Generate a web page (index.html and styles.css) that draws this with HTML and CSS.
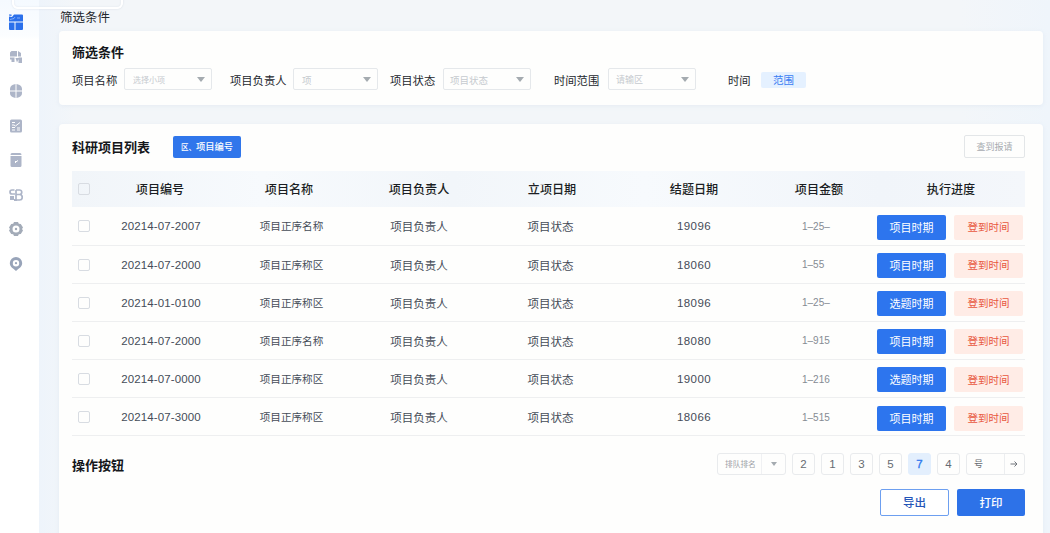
FILE: index.html
```html
<!DOCTYPE html>
<html lang="zh-CN">
<head>
    <meta charset="UTF-8">
    <meta name="viewport" content="width=device-width, initial-scale=1.0">
    <title>科研项目列表</title>
    <link rel="stylesheet" href="styles.css">
</head>
<body>
    <div class="top-tab"></div>
    <nav class="sidebar">
        <a class="active"><svg width="16" height="18" viewBox="0 0 16 18"><path d="M1 3.500L4 4l2-2.500h8a1 1 0 0 1 1 1v6H1zM1 9.500h5.500V17H2a1 1 0 0 1-1-1zM7.500 9.500H15V16a1 1 0 0 1-1 1H7.500zM1 1.500h2.500V3L1 2.500z"/><path class="line" d="M2 6.500l4-1 1-1.500M9 5h3"/></svg></a>
        <a><svg width="14" height="14" viewBox="0 0 14 14"><path d="M2.500 1H8v5.500H1v-4zM9 1l3 2v3.500H9zM1 7.500h4.500V12H2.500V9.500H1zM6.500 8H10l-2 4.500zM9.500 7.500H13V13h-3.500z"/></svg></a>
        <a><svg width="14" height="14" viewBox="0 0 14 14"><path d="M6.500 0v6.500H1V5q0-3 3-4.300zM7.500 0L10 .7q3 1.300 3 4.300v1.500H7.500zM1 7.500h5.500V14L4 13.300Q1 12 1 9zM7.500 7.500H13V9q0 3-3 4.300l-2.500.7z"/></svg></a>
        <a><svg width="14" height="14" viewBox="0 0 14 14"><rect x="1" y="0.500" width="12" height="13" rx="1.500"/><path class="line" d="M3 3.500h3M3 6h2l1.500 1L11 3.500M3 8.500h3M3 11h3M8 9h3M8 11h3"/></svg></a>
        <a><svg width="14" height="14" viewBox="0 0 14 14"><path d="M3 0h8q1.500 0 1.500 2h-11q0-2 1.500-2zM1.500 3h11v9.500q0 1.500-1.500 1.500H3q-1.500 0-1.500-1.500z"/><path class="line" d="M6 9.500l3-2M6.500 10V8"/></svg></a>
        <a><svg width="14" height="14" viewBox="0 0 14 14"><g class="outline"><path d="M5.500 2H3a2 2 0 0 0 0 4h3M7 2h3.500a2 2 0 0 1 0 4.500H7V2M7 6.500h3.500a2.500 2.500 0 0 1 0 5.500H7z"/></g><path d="M1 8h4v4H1zM5 11h3v2H5z"/></svg></a>
        <a class="gear"><svg width="14" height="14" viewBox="0 0 14 14"><path fill-rule="evenodd" d="M5 0h4l.8 1.800 2 .2L14 5.500 13 7l1 1.500-2.200 3.500-2 .2L9 14H5l-.8-1.800-2-.2L0 8.500 1 7 0 5.500 2.200 2l2-.2zM7 3.500a3.500 3.500 0 1 0 0 7 3.500 3.500 0 0 0 0-7z"/><circle cx="7" cy="7" r="1.200"/></svg></a>
        <a class="pin"><svg width="14" height="14" viewBox="0 0 14 14"><path fill-rule="evenodd" d="M7 0a6.200 6.200 0 0 1 6.200 6c0 4-3.200 5-6.200 8-3-3-6.200-4-6.200-8A6.200 6.200 0 0 1 7 0zM7 3a3.200 3.200 0 1 0 0 6.400A3.200 3.200 0 0 0 7 3z"/><circle cx="7" cy="6.200" r="1.100"/></svg></a>
    </nav>

    <main class="content">
        <div class="breadcrumb">筛选条件</div>

        <section class="card filter-card">
            <h2>筛选条件</h2>
            <div class="filters">
                <div class="field name">
                    <label>项目名称</label>
                    <div class="select"><span>选择小项</span><i class="caret"></i></div>
                </div>
                <div class="field owner">
                    <label>项目负责人</label>
                    <div class="select"><span>项</span><i class="caret"></i></div>
                </div>
                <div class="field status">
                    <label>项目状态</label>
                    <div class="select"><span>项目状态</span><i class="caret"></i></div>
                </div>
                <div class="field range">
                    <label>时间范围</label>
                    <div class="select"><span>请输区</span><i class="caret"></i></div>
                </div>
                <div class="field time">
                    <label>时间</label>
                    <span class="tag">范围</span>
                </div>
            </div>
        </section>

        <section class="card list-card">
            <div class="list-head">
                <h2>科研项目列表</h2>
                <button class="add-btn"><span>区、</span>项目编号</button>
                <button class="plain-btn">查到报请</button>
            </div>

            <div class="table">
                <div class="row head">
                    <i class="check"></i>
                    <span>项目编号</span>
                    <span>项目名称</span>
                    <span>项目负责人</span>
                    <span>立项日期</span>
                    <span>结题日期</span>
                    <span>项目金额</span>
                    <span>执行进度</span>
                </div>
                <div class="row">
                    <i class="check"></i>
                    <span class="code">20214-07-2007</span>
                    <span class="title">项目正序名称</span>
                    <span>项目负责人</span>
                    <span class="state">项目状态</span>
                    <span class="num">19096</span>
                    <span class="amount">1–25–</span>
                    <div class="actions"><button class="blue">项目时期</button><button class="pink">登到时间</button></div>
                </div>
                <div class="row">
                    <i class="check"></i>
                    <span class="code">20214-07-2000</span>
                    <span class="title">项目正序称区</span>
                    <span>项目负责人</span>
                    <span class="state">项目状态</span>
                    <span class="num">18060</span>
                    <span class="amount">1–55</span>
                    <div class="actions"><button class="blue">项目时期</button><button class="pink">登到时间</button></div>
                </div>
                <div class="row">
                    <i class="check"></i>
                    <span class="code">20214-01-0100</span>
                    <span class="title">项目正序称区</span>
                    <span>项目负责人</span>
                    <span class="state">项目状态</span>
                    <span class="num">18096</span>
                    <span class="amount">1–25–</span>
                    <div class="actions"><button class="blue">选题时期</button><button class="pink">登到时间</button></div>
                </div>
                <div class="row">
                    <i class="check"></i>
                    <span class="code">20214-07-2000</span>
                    <span class="title">项目正序名称</span>
                    <span>项目负责人</span>
                    <span class="state">项目状态</span>
                    <span class="num">18080</span>
                    <span class="amount">1–915</span>
                    <div class="actions"><button class="blue">项目时期</button><button class="pink">登到时间</button></div>
                </div>
                <div class="row">
                    <i class="check"></i>
                    <span class="code">20214-07-0000</span>
                    <span class="title">项目正序称区</span>
                    <span>项目负责人</span>
                    <span class="state">项目状态</span>
                    <span class="num">19000</span>
                    <span class="amount">1–216</span>
                    <div class="actions"><button class="blue">选题时期</button><button class="pink">登到时间</button></div>
                </div>
                <div class="row">
                    <i class="check"></i>
                    <span class="code">20214-07-3000</span>
                    <span class="title">项目正序称区</span>
                    <span>项目负责人</span>
                    <span class="state">项目状态</span>
                    <span class="num">18066</span>
                    <span class="amount">1–515</span>
                    <div class="actions"><button class="blue">项目时期</button><button class="pink">登到时间</button></div>
                </div>
            </div>

            <div class="list-foot">
                <h2>操作按钮</h2>
                <div class="pager">
                    <div class="page-size"><span>排队排名</span><i class="caret"></i></div>
                    <a>2</a>
                    <a>1</a>
                    <a>3</a>
                    <a>5</a>
                    <a class="current">7</a>
                    <a>4</a>
                    <div class="jump"><span>号</span><svg width="8" height="8" viewBox="0 0 8 8"><path d="M0.500 4h6.500M4.500 1.500L7 4 4.500 6.500"/></svg></div>
                </div>
            </div>
            <div class="buttons">
                <button class="export-btn">导出</button>
                <button class="print-btn">打印</button>
            </div>
        </section>
    </main>
</body>
</html>
```
FILE: styles.css
```css
* {
    box-sizing: border-box;
}
body {
    margin: 0;
    height: 533px;
    display: flex;
    overflow: hidden;
    background: linear-gradient(90deg, #eef4fb 39px, #f3f6f9 75px, #f3f6f9 960px, #eff5fb);
    font-family: "Noto Sans CJK SC", sans-serif;
    font-size: 12px;
    line-height: 18px;
    color: #24272d;
}
h2 {
    margin: 0;
    font-size: 13px;
    font-weight: 700;
    color: #15171b;
}
button {
    padding: 0;
    border: none;
    border-radius: 2px;
    font-family: inherit;
    line-height: 1;
    white-space: nowrap;
}
.top-tab {
    position: absolute;
    left: 12px;
    top: -12px;
    width: 111px;
    height: 21px;
    border: 2px solid #fff;
    border-radius: 6px;
    box-shadow: 0 0 2px #d3dae3, inset 0 0 2px #dde3ea;
}
.sidebar {
    width: 39px;
    flex: none;
    padding: 4.750px 7px 0 0;
    background: linear-gradient(#f5faff, #fbfdff 36px, #fff 40px);
}
.sidebar a {
    display: flex;
    height: 34.500px;
    align-items: center;
    justify-content: center;
}
.sidebar svg {
    fill: #adb5c8;
}
.sidebar .active svg {
    fill: #2b70eb;
}
.sidebar .line {
    fill: none;
    stroke: #fff;
    stroke-width: 1;
}
.sidebar .active .line {
    stroke: #a9c9fa;
    stroke-width: 0.700;
}
.sidebar .outline {
    fill: none;
    stroke: #adb5c8;
    stroke-width: 1.700;
}
.sidebar .gear svg {
    fill: #a3abb8;
}
.sidebar .pin svg {
    fill: #98a4b9;
}
.content {
    width: 984px;
    margin-left: 20px;
}
.breadcrumb {
    height: 31px;
    padding: 8px 0 0 1px;
    font-size: 12.500px;
}
.card {
    background: #fefefd;
    border-radius: 4px;
    box-shadow: 0 1px 4px rgba(200, 212, 228, 0.3);
}
.filter-card {
    height: 74px;
    padding: 12px 13px 0;
}
.filters {
    display: flex;
    margin-top: 7px;
}
.field {
    display: flex;
    align-items: center;
    height: 22px;
}
.field label {
    flex: none;
    padding-top: 1px;
    font-size: 11.300px;
}
.select {
    display: flex;
    align-items: center;
    justify-content: space-between;
    height: 22px;
    padding: 0 6px 0 8px;
    border: 1px solid #e5e8eb;
    border-radius: 2px;
    font-size: 9.500px;
    color: #c6cacf;
}
.select span {
    padding-top: 1px;
}
.name { width: 158px; }
.owner { width: 160px; }
.status { width: 164px; }
.range { width: 174px; }
.name label { width: 52px; }
.owner label { width: 63px; }
.status label { width: 53px; }
.range label { width: 54px; }
.time label { width: 33px; }
.name .select { width: 88px; font-size: 8px; }
.owner .select { width: 85px; }
.status .select { width: 88px; padding-left: 6px; }
.range .select { width: 88px; font-size: 9px; padding-left: 7px; }
.caret {
    border: 4px solid transparent;
    border-top: 5px solid #a5abb0;
    border-bottom: 0;
}
.tag {
    width: 45px;
    height: 16px;
    margin-top: 2px;
    border-radius: 2px;
    background: #e5f1ff;
    color: #3a7ef2;
    font-size: 10.500px;
    line-height: 16px;
    text-align: center;
}
.list-card {
    height: 420px;
    margin-top: 19px;
    padding: 11px 18px 0 13px;
}
.list-head {
    display: flex;
    align-items: center;
    height: 23px;
}
.add-btn {
    width: 68px;
    height: 22px;
    margin-left: 23px;
    background: #3076eb;
    color: #fff;
    font-size: 9.300px;
    font-weight: 500;
}
.add-btn span {
    font-size: 7.500px;
}
.plain-btn {
    width: 61px;
    height: 23px;
    margin-left: auto;
    border: 1px solid #e3e6e8;
    background: none;
    color: #a7abb0;
    font-size: 9px;
}
.table {
    margin-top: 13px;
}
.row {
    display: grid;
    grid-template-columns: 24px 128px 130px 130px 136px 148px 102px 155px;
    align-items: center;
    height: 38.170px;
    padding-top: 1px;
    border-bottom: 1px solid #eeeff0;
    color: #454c58;
    font-size: 11.500px;
    text-align: center;
}
.row.head {
    height: 36.400px;
    padding-top: 0;
    border: none;
    background: linear-gradient(90deg, #f1f5f9, #f7fafd 20%, #f2f6fa 40%, #f7fafd 60%, #f1f5fa 85%, #f4f7fb);
    color: #1b1e23;
    font-size: 12.100px;
    font-weight: 500;
}
.head span:last-child {
    padding-left: 7px;
}
.check {
    width: 12px;
    height: 12px;
    margin-left: 6px;
    border: 1px solid #d8dce2;
    border-radius: 2px;
}
.row .code, .row .num, .row .amount, .pager a {
    font-family: "Liberation Sans", Arial, sans-serif;
}
.row .code {
    padding-left: 2px;
    font-size: 11.500px;
    letter-spacing: 0.100px;
}
.row .title {
    padding-left: 5px;
    font-size: 10.600px;
}
.row .state {
    padding-right: 3px;
}
.row .num {
    font-size: 11.500px;
    letter-spacing: 0.400px;
}
.row .amount {
    padding: 1px 0 0 34px;
    color: #858b93;
    font-size: 10px;
    text-align: left;
}
.actions {
    display: flex;
    gap: 8px;
    padding: 1.500px 0 0 7px;
}
.actions button {
    width: 69px;
    height: 25px;
    font-size: 11px;
}
.actions .blue {
    background: #2d75ee;
    color: #fff;
}
.actions .pink {
    background: #ffece6;
    color: #e8583f;
    font-size: 10.500px;
}
.list-foot {
    display: flex;
    align-items: center;
    justify-content: space-between;
    height: 22px;
    margin-top: 17px;
}
.list-foot h2 {
    padding-top: 1px;
}
.pager {
    display: flex;
    gap: 6px;
}
.pager a, .page-size, .jump {
    height: 22px;
    border: 1px solid #e9ebed;
    border-radius: 3px;
    color: #666b72;
}
.pager a {
    width: 23px;
    font-size: 11.500px;
    line-height: 21px;
    text-align: center;
}
.pager .current {
    border-color: #e3effd;
    background: #e3effd;
    color: #2f78ee;
    -webkit-text-stroke: 0.300px #2f78ee;
}
.page-size {
    display: flex;
    align-items: center;
    width: 69px;
    font-size: 7.700px;
    color: #9da1a6;
}
.page-size span {
    width: 44px;
    padding-left: 7px;
    line-height: 20px;
    border-right: 1px solid #f0f1f3;
}
.page-size .caret {
    margin-left: 9px;
    border-width: 4px 3px 0;
}
.jump {
    display: flex;
    align-items: center;
    width: 59px;
    font-size: 9px;
}
.jump span {
    width: 38px;
    padding-left: 7px;
    line-height: 20px;
    border-right: 1px solid #eceef0;
}
.jump svg {
    margin-left: 5px;
    fill: none;
    stroke: #70757b;
}
.buttons {
    display: flex;
    justify-content: flex-end;
    gap: 8px;
    margin-top: 14px;
}
.buttons button {
    width: 69px;
    height: 27px;
    font-size: 11.500px;
    font-weight: 500;
}
.buttons .export-btn {
    border: 1px solid #6d9ff0;
    background: #fff;
    color: #2455b8;
}
.buttons .print-btn {
    width: 68px;
    background: #2d72e8;
    color: #fff;
}
```
